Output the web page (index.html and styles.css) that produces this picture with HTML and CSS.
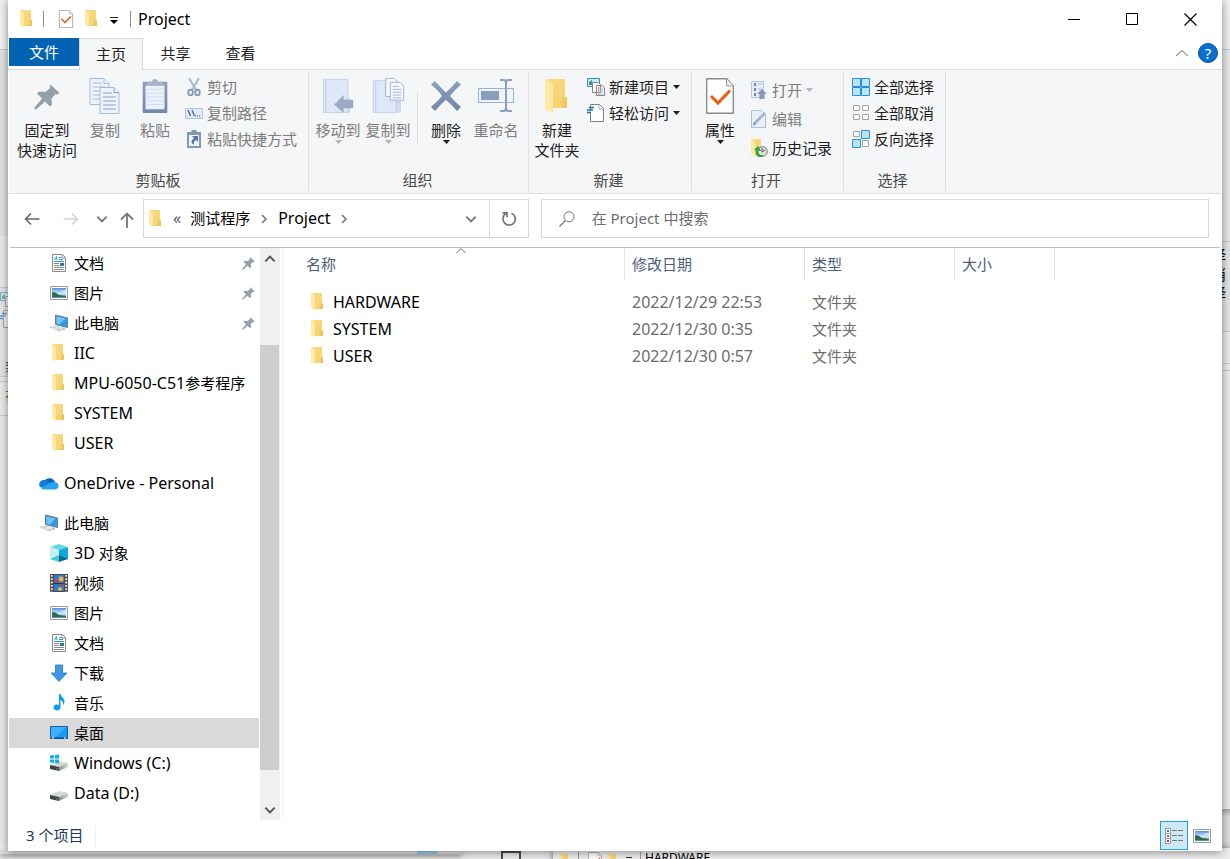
FILE: index.html
```html
<!DOCTYPE html>
<html lang="zh-CN">
<head>
<meta charset="utf-8">
<title>Project</title>
<link rel="stylesheet" href="styles.css">
</head>
<body>
<svg class="defs" aria-hidden="true">
  <defs>
    <linearGradient id="gold" x1="0" y1="0" x2="1" y2="1"><stop offset="0" stop-color="#f9dc82"/><stop offset="1" stop-color="#f5d06c"/></linearGradient>
    <linearGradient id="sky" x1="0" y1="0" x2="0" y2="1"><stop offset="0" stop-color="#4f8fe0"/><stop offset=".55" stop-color="#cfeaf8"/><stop offset="1" stop-color="#4a86ad"/></linearGradient>
    <linearGradient id="slate" x1="0" y1="0" x2="0" y2="1"><stop offset="0" stop-color="#8d9fbe"/><stop offset="1" stop-color="#7186ab"/></linearGradient>
    <linearGradient id="disk" x1="0" y1="0" x2="1" y2="0"><stop offset="0" stop-color="#8d8d8d"/><stop offset="1" stop-color="#d5d5d5"/></linearGradient>
  </defs>
  <symbol id="folder" viewBox="0 0 18 18"><path fill="url(#gold)" d="M3 0h10v10h1v6H5z"/><path fill="#e9c35c" d="M12 11h2v5h-3z"/><path fill="#ffe9a6" d="M2 0h1l3 3v14.500L2 15z"/></symbol>
  <symbol id="check-doc" viewBox="0 0 28 36"><path d="M.7.700h20L27.300 8v27.300H.7z" fill="#fff" stroke="#8c8c8c" stroke-width="1.400"/><path d="M20.500 1v7h7" fill="#ececec" stroke="#9a9a9a"/><path d="M5 18l7 7L24 12.500" fill="none" stroke="#ee5a12" stroke-width="3"/></symbol>
  <symbol id="pin" viewBox="0 0 26 26"><path fill="#96a0a8" d="M16.500.5l9 8.500-2.500 1.500-1.500-.5-4 4.500.5 6-2 2-5-5L2 25.500l-1.500-.5V23.500l7.500-9-5-5 2-2 6.500.5 4.500-4-.5-1.500z"/></symbol>
  <symbol id="document" viewBox="0 0 18 18"><path d="M2.500.500h10l3 3v14h-13z" fill="#fff" stroke="#8b8b8b"/><path d="M12 1v3h3" fill="none" stroke="#8b8b8b"/><path d="M4.500 6L6.500 2.500 7 6M9 3.500h2M9 5.500h4M4 7.500h10" stroke="#2897cf" fill="none"/><path d="M4 9.500h5M4 11.500h5M4 13.500h10M4 15.500h10" stroke="#888"/><path fill="#2c78ae" d="M10 9h4v3h-4z"/></symbol>
  <symbol id="picture" viewBox="0 0 18 18"><path d="M.5 2.500h17v13H.5z" fill="#fff" stroke="#9a9a9a"/><path fill="url(#sky)" d="M2 4h14v10H2z"/><path fill="#2e6950" d="M2 8q4 0 7 3l7 1v1H2z"/><path fill="#dff1fb" d="M9 7l7-1v3z" opacity=".7"/></symbol>
  <symbol id="computer" viewBox="0 0 20 18"><path d="M6.500 1l12 3v9.500l-12-3z" fill="#2e9be8" stroke="#69808f"/><path fill="#72c3f7" d="M7.500 2.500l9 2-6 6-3-1z"/><path fill="#c3c9ce" d="M13 13l3 1v2h-3zM0 13l7-1.500 8 3.500-5 2.500z"/><path d="M3 13.500l7 2M6 12.500l7 2.500" stroke="#eef1f3"/></symbol>
  <symbol id="cloud" viewBox="0 0 20 14"><path fill="#0a62bd" d="M5 5a6.300 6.300 0 0 1 11 1l-5 3z"/><path fill="#0c7ed6" d="M1 11a4.500 4.500 0 0 1 4-7c3-.5 4 1 7 3l-4 6z"/><path fill="#2aa2ec" d="M2 12l9-5 4-1c6 0 6 7 1 7.500H4z"/></symbol>
  <symbol id="cube" viewBox="0 0 18 18"><path fill="#62d8e5" d="M9 0l9 3-9 3-9-3z"/><path fill="#c4f0f1" d="M0 3l9 3v9l-9 0z"/><path fill="#10a8df" d="M18 3L9 6v9l9 0z"/><path fill="#44c9d5" d="M0 15l9-4v7z"/><path fill="#076f87" d="M18 15l-9-4v7z"/></symbol>
  <symbol id="film" viewBox="0 0 18 18"><path fill="#4b4b4b" d="M0 0h18v18H0z"/><path fill="#3878cf" d="M4 1h10v8H4zM4 10h10v7H4z"/><path d="M1.800 1v17M16.200 1v17" stroke="#eee" stroke-width="1.800" stroke-dasharray="1.800 1.500"/><circle cx="11" cy="5" r="2.500" fill="#e9b52b"/><path fill="#c83c33" d="M5 6h4v2H5zM10 9h3v3h-3z"/><circle cx="10" cy="15" r="1.800" fill="#efd22b"/><path d="M4 9.500h10" stroke="#333"/></symbol>
  <symbol id="download" viewBox="0 0 18 18"><path d="M5.500 1h7v8h4.500L9 17.500 1 9h4.500z" fill="#3f96e4" stroke="#2678bf" stroke-width=".8"/></symbol>
  <symbol id="music" viewBox="0 0 18 18"><path fill="#0c9bf2" d="M9 0h1.500c.5 3.500 4.500 4 4 8-.3 1.500-1 2.500-1.500 3 .5-3-.5-4-2.500-5v8a3.500 3 0 1 1-1.500-3z"/></symbol>
  <symbol id="desk" viewBox="0 0 18 18"><path d="M.5 2.500h17v12H.5z" fill="#159bf5" stroke="#14629b"/><path fill="#3cb0ff" d="M1 3h15L5 14H1z"/><path d="M1 14h16" stroke="#0c4672"/><path d="M2 14h2M14 14h2" stroke="#fff"/></symbol>
  <symbol id="drive" viewBox="0 0 18 18"><path fill="#d8d8d8" d="M0 11l9-4 9 2-9 4z"/><path fill="#424242" d="M0 11l9 2v4l-9-2z"/><path fill="url(#disk)" d="M9 13l9-4v4l-9 4z"/><path stroke="#48c06d" d="M6 15h2"/></symbol>
  <symbol id="windrive" viewBox="0 0 18 18"><use href="#drive"/><path fill="#08b0ee" d="M0 1.500L4 1v3.500H0zM5 1l4-.5v4H5zM0 5.500h4V9L0 8.500zM5 5.500h4v4L5 9z"/></symbol>
  <symbol id="copy" viewBox="0 0 32 36"><g fill="#edf3fc" stroke="#a9b9d5"><path d="M1 .500h14l5 5v21H1z"/><path d="M15 .500v5h5M4 5h9M4 9h13M4 13h13M4 17h13M4 21h13"/><path d="M11 9.500h14l5 5v21H11z"/><path d="M25 9.500v5h5M14 15h9M14 19h13M14 23h13M14 27h13M14 31h13" stroke="#8ba1c7"/></g></symbol>
  <symbol id="paste" viewBox="0 0 28 38"><rect x="1" y="4" width="26" height="33" rx="1" fill="url(#slate)"/><path fill="#eaf1fc" d="M4 8h20v25H4z"/><path d="M4 12h20M4 16h20M4 20h20M4 24h20M4 28h20" stroke="#d1ddef"/><path fill="#a8b4cb" d="M4 8l3-4h4a3 3 0 0 1 6 0h4l3 4z"/></symbol>
  <symbol id="cut" viewBox="0 0 18 18"><path d="M4 0l7 12M14 0L7 12" stroke="#aab8d0" stroke-width="2"/><g fill="none" stroke="#8295b6" stroke-width="1.800"><ellipse cx="5.500" cy="14.500" rx="2.300" ry="2.800"/><ellipse cx="12.500" cy="14.500" rx="2.300" ry="2.800"/></g></symbol>
  <symbol id="path" viewBox="0 0 18 18"><path d="M.5 4.500h17v10H.5z" fill="#dfe9f7" stroke="#b4c4df"/><path d="M3 6l2.500 6M7 6l2.500 6" stroke="#4e6689" stroke-width="1.300"/><path d="M10 12h6" stroke="#6d81a2" stroke-width="1.500" stroke-dasharray="1 1"/></symbol>
  <symbol id="shortcut" viewBox="0 0 18 18"><path fill="#8397b9" d="M2 2h4l1-2h4l1 2h4v16H2z"/><path fill="#eff5fd" d="M4 5h10v11H4z"/><path fill="#5876a5" d="M7 6h6v6l-2-2q-3 2-2 5-5-3 0-7z"/></symbol>
  <symbol id="move" viewBox="0 0 34 38"><path d="M1.500 1.500h26v35h-26z" fill="#dde7f5" stroke="#c5d3e9"/><path d="M4 2v34M25 22h4v14h-4" fill="#d2dff0" stroke="#c0cfe6"/><path fill="#9caac8" d="M13 28l10-10v5h10v9H23v5z"/></symbol>
  <symbol id="copyto" viewBox="0 0 34 38"><path d="M1.500 2.500h24v34h-24z" fill="#dde7f5" stroke="#c5d3e9"/><path d="M4 3v33M26 25h4v11h-4z" fill="#d2dff0" stroke="#c0cfe6"/><g fill="#f5f8fd" stroke="#a4b4cf"><path d="M14.500.500h9l4 4v15h-13z"/><path d="M19.500 4.500h10l4 4v15h-14z"/><path d="M22 9h6M22 12h9M22 15h9M22 18h9M22 21h9"/></g></symbol>
  <symbol id="delete" viewBox="0 0 32 32"><path d="M1 4.500L5 1Q12 9 16 12.500 21 8 27 1l4 3.500q-7 6-11 11.500Q24 21 31 27l-4 4q-6-7-11-11-4 3-11 11L1 27q7-6 11-11Q9 11 1 4.500z" fill="url(#slate)"/></symbol>
  <symbol id="rename" viewBox="0 0 36 34"><path d="M.5 9.500h35v14H.5z" fill="#edf3ff" stroke="#9db0cf"/><path fill="#899dbf" d="M3 12h18v9H3z"/><path d="M22 1h4q2 0 2 4v23q0 4-2 4h-4M34 1h-4q-2 0-2 4v23q0 4 2 4h4" fill="none" stroke="#8c9fbe" stroke-width="2"/></symbol>
  <symbol id="bigfolder" viewBox="0 0 28 36"><path fill="url(#gold)" d="M4 1h18v18h2v11H8z"/><path fill="#f1c860" d="M20 20l4-1v11h-5z"/><path fill="#ffe9a6" d="M2 1h1l7 6v29l-8-5z"/></symbol>
  <symbol id="newitem" viewBox="0 0 18 18"><path d="M.5.500h12v8H.5z" fill="#c7eafa" stroke="#368fac"/><path fill="#4b9186" d="M2 7V4l3-2v5z"/><path d="M5.500 4.500h6l2 2v8h-8zM9.500 7.500h6l2 2v8h-8z" fill="#fff" stroke="#858585"/><path d="M12 10h4M11 12h5M11 14h5M11 16h5" stroke="#92bce9"/><path d="M11.500 9v8" stroke="#e69484"/></symbol>
  <symbol id="easy" viewBox="0 0 18 18"><path d="M3.500 6V.500h9l4 4v13h-13V9" fill="#fff" stroke="#7f7f7f"/><path d="M12 1v4h4" fill="none" stroke="#aaa"/><path d="M2 3.500h5M0 6h6M0 8.500h4" stroke="#1d6db5" stroke-width="1.400"/></symbol>
  <symbol id="open" viewBox="0 0 18 18"><path d="M1.500.500h12v16h-12z" fill="#e7eefa" stroke="#b6c5de"/><path d="M4 2h2v3H4zM4 7h2v3H4zM4 12h2v3H4z" fill="#7188ae"/><path d="M8 3h4M8 8h4" stroke="#a6b7d4"/><path fill="#8497b9" d="M12 8l5 5h-2.500v5h-5v-5H7z"/></symbol>
  <symbol id="edit" viewBox="0 0 18 18"><path d="M1.500.500h10l4 4v13h-14z" fill="#e8f0fb" stroke="#afc0dc"/><path d="M4 14L15 3" stroke="#9db1d1" stroke-width="2.500"/><path d="M3 16l1-3 2 1z" fill="#7186a8"/></symbol>
  <symbol id="history" viewBox="0 0 18 18"><path fill="url(#gold)" d="M2 0h9v15l-5 2-5-2V0z"/><path fill="#ffe9a6" d="M1 0l4 4v13l-4-2z"/><circle cx="12.500" cy="12.500" r="4.800" fill="#ddd" stroke="#777"/><path d="M12 9v4l3-2" fill="none" stroke="#555"/><path d="M13 17.500q-7 0-6-6" fill="none" stroke="#28a535" stroke-width="2.400"/><path fill="#28a535" d="M4 11l4-4 3 5z"/></symbol>
  <symbol id="all" viewBox="0 0 18 18"><path fill="#bce3fc" stroke="#2390dc" d="M.5.500h8v8h-8zM9.500.500h8v8h-8zM.5 9.500h8v8h-8zM9.500 9.500h8v8h-8z"/></symbol>
  <symbol id="none" viewBox="0 0 18 18"><path fill="#f9f9f9" stroke="#a3a3a3" d="M1.500 1.500h6v5h-6zM10.500 1.500h6v5h-6zM1.500 10.500h6v5h-6zM10.500 10.500h6v5h-6z"/></symbol>
  <symbol id="invert" viewBox="0 0 18 18"><path fill="#f9f9f9" stroke="#a3a3a3" d="M1.500 1.500h6v5h-6zM10.500 10.500h6v6h-6z"/><path fill="#bce3fc" stroke="#2390dc" d="M9.500.500h8v8h-8zM.5 9.500h8v8h-8z"/></symbol>
  <symbol id="down" viewBox="0 0 12 12"><path d="M2 4l4 4 4-4" fill="none" stroke="currentColor" stroke-width="1.600"/></symbol>
  <symbol id="up" viewBox="0 0 12 12"><path d="M2 8l4-4 4 4" fill="none" stroke="currentColor" stroke-width="1.600"/></symbol>
  <symbol id="up-thin" viewBox="0 0 12 12"><path d="M1.500 8L6 3.500 10.500 8" fill="none" stroke="currentColor"/></symbol>
  <symbol id="right" viewBox="0 0 12 12"><path d="M4 2l4 4-4 4" fill="none" stroke="currentColor" stroke-width="1.600"/></symbol>
  <symbol id="caret" viewBox="0 0 7 4"><path d="M0 0h7L3.500 4z" fill="currentColor"/></symbol>
</svg>

<div class="backdrop" aria-hidden="true">
  <div class="strip left-top"></div><div class="strip left-mid"></div><div class="strip left-ribbon"></div><div class="strip left-low"></div>
  <svg class="peek peek-a" viewBox="0 0 18 18"><use href="#newitem"/></svg><svg class="peek peek-b" viewBox="0 0 18 18"><use href="#easy"/></svg>
  <span class="peek peek-c">新</span><span class="peek peek-d">在</span>
  <div class="strip right-top"></div><div class="strip right-mid"></div><div class="strip right-ribbon"><span>择</span><span>消</span><span>择</span></div><div class="strip right-gap"></div><div class="strip right-end"></div>
  <div class="strip bottom-left"></div><div class="strip bottom-blue"></div><div class="strip bottom-square"></div>
  <div class="other-window"><svg><use href="#folder"/></svg><i></i><svg><use href="#check-doc"/></svg><svg><use href="#folder"/></svg><b></b><i></i><span>HARDWARE</span></div>
</div>

<main class="window">
  <header class="titlebar">
    <svg class="icon"><use href="#folder"/></svg><span class="sep"></span>
    <button class="quick" aria-label="属性"><svg class="icon"><use href="#check-doc"/></svg></button>
    <button class="quick" aria-label="新建文件夹"><svg class="icon"><use href="#folder"/></svg></button>
    <button class="quick customize" aria-label="自定义快速访问工具栏"><svg viewBox="0 0 8 7"><path d="M0 .500h8" stroke="#222"/><path d="M0 3h8L4 7z"/></svg></button>
    <span class="sep"></span><h1 class="title">Project</h1>
    <div class="controls">
      <button aria-label="最小化"><svg viewBox="0 0 13 13"><path d="M0 6.500h12" stroke="#000"/></svg></button>
      <button aria-label="最大化"><svg viewBox="0 0 13 13"><path d="M.5.500h11v11H.5z" fill="none" stroke="#000"/></svg></button>
      <button aria-label="关闭"><svg viewBox="0 0 13 13"><path d="M.5.500l12 12M12.500.500l-12 12" stroke="#000" stroke-width="1.200"/></svg></button>
    </div>
  </header>

  <nav class="tabs">
    <button class="tab file">文件</button><button class="tab active">主页</button><button class="tab">共享</button><button class="tab">查看</button>
    <div class="tab-tools"><button class="collapse" aria-label="折叠功能区"><svg viewBox="0 0 14 8"><path d="M1 7l6-5.500L13 7" fill="none" stroke="#999" stroke-width="1.200"/></svg></button><button class="help" aria-label="帮助">?</button></div>
  </nav>

  <section class="ribbon">
    <div class="group clipboard">
      <div class="tools">
        <button class="big pinbtn"><svg class="pin-icon"><use href="#pin"/></svg><span>固定到<br>快速访问</span></button>
        <button class="big off"><svg><use href="#copy"/></svg><span>复制</span></button>
        <button class="big off"><svg><use href="#paste"/></svg><span>粘贴</span></button>
        <div class="list">
          <button class="small off"><svg><use href="#cut"/></svg>剪切</button>
          <button class="small off"><svg><use href="#path"/></svg>复制路径</button>
          <button class="small off"><svg><use href="#shortcut"/></svg>粘贴快捷方式</button>
        </div>
      </div>
      <div class="group-name">剪贴板</div>
    </div>
    <div class="group organize">
      <div class="tools">
        <button class="big off"><svg><use href="#move"/></svg><span>移动到</span><svg class="caret"><use href="#caret"/></svg></button>
        <button class="big off"><svg><use href="#copyto"/></svg><span>复制到</span><svg class="caret"><use href="#caret"/></svg></button>
        <span class="rule"></span>
        <button class="big"><svg viewBox="-2 -2 36 36"><use href="#delete" width="32" height="32"/></svg><span>删除</span><svg class="caret"><use href="#caret"/></svg></button>
        <button class="big off"><svg><use href="#rename"/></svg><span>重命名</span></button>
      </div>
      <div class="group-name">组织</div>
    </div>
    <div class="group create">
      <div class="tools">
        <button class="big"><svg><use href="#bigfolder"/></svg><span>新建<br>文件夹</span></button>
        <div class="list">
          <button class="small"><svg><use href="#newitem"/></svg>新建项目<svg class="caret"><use href="#caret"/></svg></button>
          <button class="small"><svg><use href="#easy"/></svg>轻松访问<svg class="caret"><use href="#caret"/></svg></button>
        </div>
      </div>
      <div class="group-name">新建</div>
    </div>
    <div class="group opening">
      <div class="tools">
        <button class="big"><svg><use href="#check-doc"/></svg><span>属性</span><svg class="caret"><use href="#caret"/></svg></button>
        <div class="list roomy">
          <button class="small off"><svg><use href="#open"/></svg>打开<svg class="caret"><use href="#caret"/></svg></button>
          <button class="small off"><svg><use href="#edit"/></svg>编辑</button>
          <button class="small"><svg><use href="#history"/></svg>历史记录</button>
        </div>
      </div>
      <div class="group-name">打开</div>
    </div>
    <div class="group select">
      <div class="tools">
        <div class="list">
          <button class="small"><svg><use href="#all"/></svg>全部选择</button>
          <button class="small"><svg><use href="#none"/></svg>全部取消</button>
          <button class="small"><svg><use href="#invert"/></svg>反向选择</button>
        </div>
      </div>
      <div class="group-name">选择</div>
    </div>
  </section>

  <section class="addressbar">
    <div class="history-nav">
      <button aria-label="后退"><svg viewBox="0 0 16 16"><path d="M15.500 8H1.500M7 2.500L1.500 8 7 13.500" fill="none" stroke="#666" stroke-width="1.600"/></svg></button>
      <button aria-label="前进"><svg viewBox="0 0 16 16"><path d="M.5 8h14M9 2.500L14.500 8 9 13.500" fill="none" stroke="#d3d3d3" stroke-width="1.600"/></svg></button>
      <button class="recent" aria-label="最近浏览的位置"><svg viewBox="0 0 12 12"><use href="#down"/></svg></button>
      <button class="parent" aria-label="向上"><svg viewBox="0 0 16 16"><path d="M8 16V1.500M2 7.500l6-6 6 6" fill="none" stroke="#777" stroke-width="1.800"/></svg></button>
    </div>
    <div class="crumbs">
      <svg class="icon"><use href="#folder"/></svg><span class="more">«</span>
      <button class="crumb">测试程序</button><svg class="chev"><use href="#right"/></svg>
      <button class="crumb latin">Project</button><svg class="chev"><use href="#right"/></svg>
      <button class="drop" aria-label="以前的位置"><svg viewBox="0 0 12 12"><use href="#down"/></svg></button>
      <button class="refresh" aria-label="刷新"><svg viewBox="0 0 16 16"><path d="M10.500 2.200A6.200 6.200 0 1 1 5 2.600M1.500 1.800h4.500v4.500" fill="none" stroke="#777" stroke-width="1.700"/></svg></button>
    </div>
    <label class="search"><svg viewBox="0 0 16 16"><circle cx="10" cy="5.800" r="5" fill="none" stroke="#777"/><path d="M6.500 9.500L.5 15.500" stroke="#777" stroke-width="1.200"/></svg><input type="search" placeholder="在 Project 中搜索" aria-label="在 Project 中搜索"></label>
  </section>

  <div class="content">
    <nav class="tree">
      <a href="#"><svg><use href="#document"/></svg>文档<svg class="mark"><use href="#pin"/></svg></a>
      <a href="#"><svg><use href="#picture"/></svg>图片<svg class="mark"><use href="#pin"/></svg></a>
      <a href="#"><svg class="wide"><use href="#computer"/></svg>此电脑<svg class="mark"><use href="#pin"/></svg></a>
      <a href="#" class="latin"><svg><use href="#folder"/></svg>IIC</a>
      <a href="#"><svg><use href="#folder"/></svg><span><span class="latin">MPU-6050-C51</span>参考程序</span></a>
      <a href="#" class="latin"><svg><use href="#folder"/></svg>SYSTEM</a>
      <a href="#" class="latin"><svg><use href="#folder"/></svg>USER</a>
      <a href="#" class="root latin"><svg class="wide"><use href="#cloud"/></svg>OneDrive - Personal</a>
      <a href="#" class="root"><svg class="wide"><use href="#computer"/></svg>此电脑</a>
      <a href="#"><svg><use href="#cube"/></svg><span><span class="latin">3D</span> 对象</span></a>
      <a href="#"><svg><use href="#film"/></svg>视频</a>
      <a href="#"><svg><use href="#picture"/></svg>图片</a>
      <a href="#"><svg><use href="#document"/></svg>文档</a>
      <a href="#"><svg><use href="#download"/></svg>下载</a>
      <a href="#"><svg><use href="#music"/></svg>音乐</a>
      <a href="#" class="selected"><svg><use href="#desk"/></svg>桌面</a>
      <a href="#" class="latin"><svg><use href="#windrive"/></svg>Windows (C:)</a>
      <a href="#" class="latin"><svg><use href="#drive"/></svg>Data (D:)</a>
    </nav>
    <div class="scrollbar" aria-hidden="true"><svg viewBox="0 0 12 12"><use href="#up"/></svg><div class="track"><div class="before"></div><div class="thumb"></div><div class="after"></div></div><svg viewBox="0 0 12 12"><use href="#down"/></svg></div>
    <section class="files">
      <table>
        <colgroup><col class="c-name"><col class="c-date"><col class="c-type"><col class="c-size"><col></colgroup>
        <thead><tr><th><svg class="sort" viewBox="0 0 12 12"><use href="#up-thin"/></svg>名称</th><th>修改日期</th><th>类型</th><th>大小</th><th class="rest"></th></tr></thead>
        <tbody>
          <tr><td><span class="name"><svg><use href="#folder"/></svg>HARDWARE</span></td><td class="latin">2022/12/29 22:53</td><td>文件夹</td><td></td><td></td></tr>
          <tr><td><span class="name"><svg><use href="#folder"/></svg>SYSTEM</span></td><td class="latin">2022/12/30 0:35</td><td>文件夹</td><td></td><td></td></tr>
          <tr><td><span class="name"><svg><use href="#folder"/></svg>USER</span></td><td class="latin">2022/12/30 0:57</td><td>文件夹</td><td></td><td></td></tr>
        </tbody>
      </table>
    </section>
  </div>

  <footer class="status">
    <span class="count">3 个项目</span>
    <button class="view on" aria-label="详细信息"><svg viewBox="0 0 18 16"><path d="M.5.500h5v15h-5zM.5 5.500h5M.5 10.500h5" fill="#fff" stroke="#999"/><path fill="#3d8392" d="M2 2h2v2H2zM2 7h2v2H2z"/><path fill="#cb3125" d="M2 12h2v2H2z"/><path d="M7 2.500h5M13 2.500h5M7 7.500h5M13 7.500h5M7 12.500h5M13 12.500h5" stroke="#777"/></svg></button>
    <button class="view" aria-label="大图标"><svg viewBox="0 0 18 18"><use href="#picture"/></svg></button>
  </footer>
</main>
</body>
</html>
```
FILE: styles.css
```css
* { box-sizing: border-box; }
body {
  margin: 0;
  background: #ebebeb;
  color: #000;
  font: 15px/20px "Noto Sans", "Noto Sans CJK SC", sans-serif;
}
button { margin: 0; padding: 0; border: 0; background: none; color: inherit; font: inherit; }
svg { display: block; flex: none; }
.defs { position: absolute; width: 0; height: 0; }
.latin { font-size: 16px; }
.icon { width: 18px; height: 18px; }

/* slivers of the windows behind */
.backdrop { position: absolute; inset: 0; overflow: hidden; z-index: -1; }
.strip, .peek { position: absolute; }
.left-top { left: 0; top: 0; width: 8px; height: 50px; background: #f2f2f2; border-bottom: 1px solid #c9c9c9; }
.left-mid { left: 0; top: 50px; width: 8px; height: 186px; background: #e2e2e2; }
.left-ribbon { left: 0; top: 287px; width: 8px; height: 90px; background: #e4e6e8; border: solid #c9c9c9; border-width: 1px 0; }
.left-low { left: 0; top: 381px; width: 8px; height: 35px; border: solid #c9c9c9; border-width: 1px 0; }
.peek { width: 18px; height: 18px; font-size: 15px; opacity: .6; }
.peek-a { left: 0; top: 292px; }
.peek-b { left: 0; top: 310px; }
.peek-c { left: 5px; top: 357px; }
.peek-d { left: 5px; top: 385px; }
.right-top { right: 0; top: 0; width: 8px; height: 50px; background: #f1f1f1; border-bottom: 1px solid #c9c9c9; }
.right-mid { right: 0; top: 50px; width: 8px; height: 192px; background: #e9e9e9; border-bottom: 1px solid #c9c9c9; }
.right-ribbon { right: 0; top: 242px; width: 8px; height: 90px; padding-top: 3px; background: #e3e5e7; border-bottom: 1px solid #c9c9c9; }
.right-ribbon span { display: block; margin-left: -11px; height: 19px; }
.right-gap { right: 0; top: 363px; width: 8px; height: 8px; border: solid #c9c9c9; border-width: 1px 0; }
.right-end { right: 0; top: 809px; width: 8px; height: 50px; background: linear-gradient(#aaa, #dedede 8px); }
.bottom-left { left: 0; top: 851px; width: 462px; height: 3px; background: #ddd; box-shadow: 0 2px 5px #777; }
.bottom-blue { left: 417px; top: 849px; width: 21px; height: 5px; background: #8ed0ec; }
.bottom-square { left: 501px; top: 851px; width: 20px; height: 20px; border: 2px solid #4b4b58; background: #ececec; }
.other-window { position: absolute; left: 553px; right: 0; top: 848px; height: 38px; padding-left: 5px; background: #eee; display: flex; gap: 4px; box-shadow: 0 0 6px #777; }
.other-window svg { width: 14px; height: 18px; margin-top: 4px; }
.other-window i { width: 1px; height: 18px; margin: 4px 0 0 2px; background: #999; }
.other-window i + svg { margin-left: 5px; }
.other-window b { width: 6px; height: 1px; margin: 9px 2px 0; background: #333; }
.other-window span { font-size: 12px; line-height: 20px; }

.window {
  display: flex;
  flex-direction: column;
  min-height: calc(100vh - 8px);
  margin: 0 8px 8px;
  background: #fff;
  box-shadow: 0 1px 9px rgba(0, 0, 0, .45);
}

.titlebar { display: flex; align-items: center; height: 38px; padding-left: 10px; }
.sep { width: 1px; height: 16px; background: #8c8c8c; }
.titlebar > .icon { margin-right: 7px; }
.quick { width: 18px; margin-left: 13px; }
.quick + .quick { margin-left: 8px; }
.quick.customize { width: 8px; margin: 2px 12px 0 9px; }
.customize svg { width: 8px; height: 7px; }
.title { margin: 0 auto 0 7px; font-size: 16px; font-weight: 400; }
.controls { display: flex; margin-right: 3px; }
.controls button { width: 58px; height: 38px; display: grid; place-items: center; }
.controls svg { width: 13px; height: 13px; }

.tabs { display: flex; height: 32px; padding: 0 1px; border-bottom: 1px solid #dadbdc; color: #222; }
.tab { width: 65px; height: 31px; padding: 0 0 2px; }
.tab.file { width: 70px; height: 28px; padding: 0; background: #0063b1; color: #fff; }
.tab.active { width: 64px; height: 32px; background: #f5f6f7; border: solid #dadbdc; border-width: 1px 1px 0; }
.tab-tools { display: flex; align-items: center; gap: 9px; margin-left: auto; padding: 0 3px 2px 0; }
.collapse svg { width: 14px; height: 8px; }
.help { width: 20px; height: 20px; border: 1px solid #084f8f; border-radius: 50%; background: #0a6fd0; color: #fff; line-height: 18px; }

.ribbon { display: flex; height: 124px; margin: 0 1px; padding-top: 2px; background: #f5f6f7; border-bottom: 1px solid #dadbdc; color: #1e1e1e; }
.group { display: flex; flex-direction: column; height: 119px; border-right: 1px solid #dfe0e2; }
.tools { display: flex; flex: 1; padding-top: 4px; }
.group-name { height: 21px; padding-right: 6px; text-align: center; color: #4a4a4a; }
.clipboard { width: 300px; padding-left: 5px; }
.organize { width: 220px; padding-left: 4px; }
.create { width: 163px; padding-left: 3px; }
.opening { width: 152px; padding-left: 3px; }
.select { width: 102px; padding-left: 8px; }
.select .group-name { padding-right: 12px; }
.big { display: flex; flex-direction: column; align-items: center; width: 50px; white-space: nowrap; }
.big > svg { width: 36px; height: 36px; margin: 2px 0 6px; }
.big > .pin-icon { width: 26px; height: 26px; margin: 8px 0 10px; }
.big > .caret { width: 7px; height: 4px; margin: 0; }
.pinbtn { width: 66px; }
.off { color: #7c7c7c; }
.off .caret { color: #b5b5b5; }
.rule { width: 1px; height: 54px; margin: 15px 3px 0 4px; background: #dfe0e2; }
.list { display: flex; flex-direction: column; padding-left: 5px; }
.small { display: flex; align-items: center; gap: 4px; height: 26px; white-space: nowrap; }
.small svg { width: 18px; height: 18px; }
.small .caret { width: 7px; height: 4px; }
.tools .list { margin-top: -2px; }
.select .list { padding-left: 0; }
.tools .roomy { margin-top: -1px; }
.roomy .small { height: 29px; }

.addressbar { display: flex; align-items: center; height: 54px; margin: 0 2px; padding: 0 11px 4px 13px; border-bottom: 1px solid #bcbcbc; color: #000; }
.history-nav { display: flex; align-items: center; width: 120px; }
.history-nav button { margin-left: 1px; }
.history-nav button + button { margin-left: 23px; }
.history-nav svg { width: 16px; height: 16px; }
.history-nav .recent { margin-left: 16px; color: #777; }
.history-nav .recent svg, .drop svg { width: 14px; height: 14px; }
.history-nav .parent { margin: 2px 0 0 10px; }
.crumbs, .search { display: flex; align-items: center; height: 39px; border: 1px solid #d9d9d9; }
.crumbs { flex: 381 1 0; padding-left: 3px; }
.crumb, .more { padding-bottom: 2px; }
.more { margin: 0 9px 0 8px; color: #555; font-size: 16px; line-height: 18px; }
.chev { width: 12px; height: 12px; margin: 0 8px; color: #777; }
.drop { margin: 0 11px 0 auto; color: #777; }
.refresh { width: 39px; height: 37px; border-left: 1px solid #d9d9d9; display: grid; place-items: center; }
.refresh svg { width: 16px; height: 16px; }
.search { flex: 650 1 0; gap: 17px; margin-left: 12px; padding-left: 17px; }
.search svg { width: 16px; height: 16px; }
.search input { flex: 1; min-width: 0; padding: 0 0 2px; border: 0; outline: 0; background: none; font: inherit; }
.search input::placeholder { color: #6d6d6d; opacity: 1; }

.content { display: flex; flex: 1; padding-left: 1px; }
.tree { width: 250px; padding-bottom: 12px; }
.tree a { display: flex; align-items: center; gap: 6px; height: 30px; padding: 0 4px 0 41px; color: #000; text-decoration: none; white-space: nowrap; }
.tree svg { width: 18px; height: 18px; }
.tree a > .mark { width: 13px; height: 13px; margin-left: auto; }
.tree .root { margin: 10px 0; padding-left: 31px; }
.tree .root + .root { margin-bottom: 0; }
.tree .wide { width: 20px; margin: 0 -1px; }
.tree .selected { background: #d9d9d9; }
.scrollbar { display: flex; flex-direction: column; align-items: center; width: 20px; margin-left: 1px; padding: 4px 1px 3px 0; background: #f0f0f0; color: #505050; }
.scrollbar svg { width: 14px; height: 14px; }
.track { display: flex; flex: 1; flex-direction: column; width: 19px; }
.before { flex: 79; }
.thumb { flex: 425; background: #cdcdcd; }
.after { flex: 33; }
.files { flex: 1; margin-left: 2px; padding-left: 15px; border-left: 1px solid #f5f5f5; }
table { width: 100%; table-layout: fixed; border-collapse: separate; border-spacing: 0; }
.c-name { width: 327px; }
.c-date { width: 180px; }
.c-type { width: 150px; }
.c-size { width: 100px; }
th, td { padding: 0 7px; text-align: left; font-weight: 400; }
th { position: relative; height: 32px; border-right: 1px solid #e5e5e5; color: #4c607a; }
th:first-child, td:first-child { padding-left: 8px; }
th.rest { border: 0; }
.sort { position: absolute; left: calc(50% - 6px); top: -3px; width: 12px; height: 12px; color: #666; }
td { height: 27px; color: #6d6d6d; }
tbody::before { content: ""; display: block; height: 8px; }
.name { display: flex; align-items: center; gap: 6px; padding-left: 3px; color: #000; font-size: 16px; }
.name svg { width: 18px; height: 18px; }

.status { display: flex; align-items: center; height: 31px; padding: 0 6px 0 18px; color: #1e395b; }
.count { margin-right: auto; padding: 0 12px 2px 0; border-right: 1px solid #eee; }
.view { display: grid; place-items: center; width: 28px; height: 29px; border: 1px solid transparent; }
.view.on { border-color: #26a0da; background: #cce8f6; }
.view svg { width: 18px; height: 18px; }
```
